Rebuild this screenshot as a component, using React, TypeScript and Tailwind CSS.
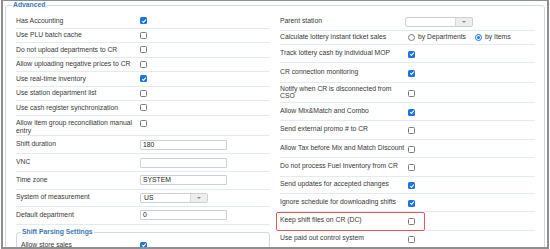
import React from 'react';

type Opt = { label: string; on?: boolean; h: string; wrap?: boolean };

const Check = ({ on = false }: { on?: boolean }) =>
  on ? (
    <span className="flex h-[7px] w-[7px] shrink-0 items-center justify-center rounded-[1.5px] bg-[#1a73e8]">
      <svg viewBox="0 0 8 8" className="h-[6px] w-[6px]">
        <path d="M1.6 4.3 3.3 5.9 6.5 2.1" fill="none" stroke="white" strokeWidth="1.4" />
      </svg>
    </span>
  ) : (
    <span className="block h-[7px] w-[7px] shrink-0 rounded-[1.5px] border border-[#7c7c7c] bg-white" />
  );

const Radio = ({ on = false }: { on?: boolean }) => (
  <span
    className={`flex h-[7px] w-[7px] shrink-0 items-center justify-center rounded-full border bg-white ${
      on ? 'border-[#1a73e8]' : 'border-[#7c7c7c]'
    }`}
  >
    {on && <span className="h-[3.5px] w-[3.5px] rounded-full bg-[#1a73e8]" />}
  </span>
);

const Select = ({ value = '' }: { value?: string }) => (
  <div className="flex h-[10px] w-[68px] overflow-hidden rounded-[2px] border border-[#cfcfcf] bg-white">
    <span className="flex-1 pl-[3px] leading-[8px] text-[#222]">{value}</span>
    <span className="flex w-[17px] items-center justify-center border-l border-[#dadada] bg-[#ededed]">
      <span className="h-0 w-0 border-x-[2px] border-t-[2px] border-x-transparent border-t-[#8a8a8a]" />
    </span>
  </div>
);

const Field = ({ value = '' }: { value?: string }) => (
  <div className="h-[10px] w-[87px] rounded-[1px] border border-[#c9d2dc] bg-white pl-[2px] leading-[8px] text-[#222]">
    {value}
  </div>
);

const leftChecks: Opt[] = [
  { label: 'Has Accounting', on: true, h: 'h-[14.5px]' },
  { label: 'Use PLU batch cache', h: 'h-[14.5px]' },
  { label: 'Do not upload departments to CR', h: 'h-[14.5px]' },
  { label: 'Allow uploading negative prices to CR', h: 'h-[14.5px]' },
  { label: 'Use real-time inventory', on: true, h: 'h-[14.5px]' },
  { label: 'Use station department list', h: 'h-[14.5px]' },
  { label: 'Use cash register synchronization', h: 'h-[14.5px]' },
];

const rightChecks: Opt[] = [
  { label: 'Track lottery cash by individual MOP', on: true, h: 'h-[18px]' },
  { label: 'CR connection monitoring', on: true, h: 'h-[20px]' },
  { label: 'Notify when CR is disconnected from CSO', h: 'h-[20px]', wrap: true },
  { label: 'Allow Mix&Match and Combo', on: true, h: 'h-[18px]' },
  { label: 'Send external promo # to CR', h: 'h-[19px]' },
  { label: 'Allow Tax before Mix and Match Discount', h: 'h-[18px]' },
  { label: 'Do not process Fuel Inventory from CR', h: 'h-[19px]' },
  { label: 'Send updates for accepted changes', on: true, h: 'h-[17px]' },
  { label: 'Ignore schedule for downloading shifts', on: true, h: 'h-[18px]' },
];

const line = 'border-b border-[#e3eaf2]';

export default function App() {
  return (
    <div className="h-[249px] w-[550px] overflow-hidden bg-white font-['Liberation_Sans',Arial,sans-serif] text-[6.8px] leading-[8.5px] text-[#383838]">
      <div className="ml-[1px] h-[249px] w-[548px] overflow-hidden border-x-2 border-t border-b-2 border-[#8e8e8e]">
        <fieldset className="ml-[2px] h-[260px] w-[540px] rounded-[3px] border border-[#cddbe8]">
          <legend className="ml-[6px] px-[1px] font-bold leading-[8px] text-[#3b78b5]">Advanced</legend>
          <div className="flex gap-[10px] pl-[10px] pt-[5px]">
            {/* left column */}
            <div className="w-[254px]">
              {leftChecks.map((o) => (
                <div key={o.label} className={`flex items-center ${line} ${o.h}`}>
                  <div className="w-[124px] shrink-0 whitespace-nowrap">{o.label}</div>
                  <Check on={o.on} />
                </div>
              ))}
              <div className={`flex h-[20.5px] items-start ${line}`}>
                <div className="w-[124px] shrink-0 pt-[3px] leading-[8.5px]">Allow item group reconciliation manual entry</div>
                <span className="mt-[4.5px]">
                  <Check />
                </span>
              </div>
              <div className={`flex h-[18px] items-center ${line}`}>
                <div className="w-[124px] shrink-0 pb-[1px]">Shift duration</div>
                <Field value="180" />
              </div>
              <div className={`flex h-[18px] items-center ${line}`}>
                <div className="w-[124px] shrink-0 pb-[1px]">VNC</div>
                <Field />
              </div>
              <div className={`flex h-[17.5px] items-center ${line}`}>
                <div className="w-[124px] shrink-0 pb-[1px]">Time zone</div>
                <Field value="SYSTEM" />
              </div>
              <div className={`flex h-[17.5px] items-center ${line}`}>
                <div className="w-[124px] shrink-0 pb-[1px]">System of measurement</div>
                <Select value="US" />
              </div>
              <div className={`flex h-[17.5px] items-center ${line}`}>
                <div className="w-[124px] shrink-0 pb-[1px]">Default department</div>
                <Field value="0" />
              </div>
              <fieldset className="mt-[3.5px] h-[40px] rounded-[3px] border border-[#cddbe8]">
                <legend className="ml-[4px] px-[1px] font-bold leading-[8px] text-[#3b78b5]">Shift Parsing Settings</legend>
                <div className="flex h-[18px] items-center pl-[4px]">
                  <div className="w-[119px] shrink-0">Allow store sales</div>
                  <Check on />
                </div>
              </fieldset>
            </div>

            {/* right column */}
            <div className="w-[255px]">
              <div className={`flex h-[17px] items-center ${line}`}>
                <div className="w-[125px] shrink-0 pb-[1px]">Parent station</div>
                <Select />
              </div>
              <div className={`flex h-[14px] items-center ${line}`}>
                <div className="w-[125px] shrink-0 whitespace-nowrap">Calculate lottery instant ticket sales</div>
                <div className="ml-[3px] flex items-center">
                  <Radio />
                  <span className="ml-[3px]">by Departments</span>
                  <span className="ml-[9px]">
                    <Radio on />
                  </span>
                  <span className="ml-[3px]">by Items</span>
                </div>
              </div>
              {rightChecks.map((o) => (
                <div key={o.label} className={`flex items-center ${line} ${o.h}`}>
                  <div className={`w-[125px] shrink-0 pb-[1px] ${o.wrap ? 'leading-[7.5px]' : 'whitespace-nowrap'}`}>{o.label}</div>
                  <span className="ml-[3px] mt-[1px]">
                    <Check on={o.on} />
                  </span>
                </div>
              ))}
              <div className={`relative flex h-[19px] items-center ${line}`}>
                <div className="w-[125px] shrink-0 pb-[1px] whitespace-nowrap">Keep shift files on CR (DC)</div>
                <span className="ml-[3px] mt-[1px]">
                  <Check />
                </span>
                <div className="absolute left-[-4px] top-0 h-[19px] w-[149px] rounded-[2px] border-[1.5px] border-[#e4585c]" />
              </div>
              <div className={`flex h-[18px] items-center ${line}`}>
                <div className="w-[125px] shrink-0 pb-[2px] whitespace-nowrap">Use paid out control system</div>
                <span className="ml-[3px]">
                  <Check />
                </span>
              </div>
            </div>
          </div>
        </fieldset>
      </div>
    </div>
  );
}
